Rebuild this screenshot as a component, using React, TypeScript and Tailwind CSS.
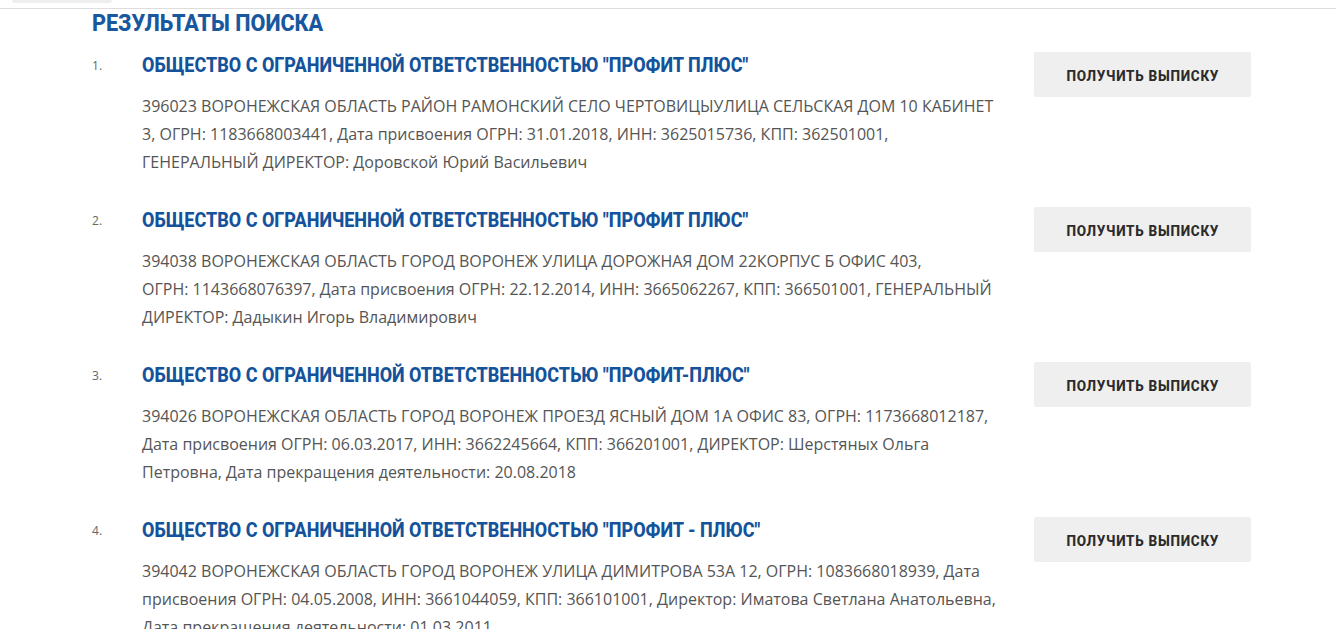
const items = [
  {
    title: 'ОБЩЕСТВО С ОГРАНИЧЕННОЙ ОТВЕТСТВЕННОСТЬЮ "ПРОФИТ ПЛЮС"',
    text: "396023 ВОРОНЕЖСКАЯ ОБЛАСТЬ РАЙОН РАМОНСКИЙ СЕЛО ЧЕРТОВИЦЫУЛИЦА СЕЛЬСКАЯ ДОМ 10 КАБИНЕТ 3, ОГРН:\u00a01183668003441, Дата присвоения ОГРН:\u00a031.01.2018, ИНН:\u00a03625015736, КПП:\u00a0362501001, ГЕНЕРАЛЬНЫЙ ДИРЕКТОР: Доровской Юрий Васильевич",
  },
  {
    title: 'ОБЩЕСТВО С ОГРАНИЧЕННОЙ ОТВЕТСТВЕННОСТЬЮ "ПРОФИТ ПЛЮС"',
    text: "394038 ВОРОНЕЖСКАЯ ОБЛАСТЬ ГОРОД ВОРОНЕЖ УЛИЦА ДОРОЖНАЯ ДОМ 22КОРПУС Б ОФИС 403, ОГРН:\u00a01143668076397, Дата присвоения ОГРН:\u00a022.12.2014, ИНН:\u00a03665062267, КПП:\u00a0366501001, ГЕНЕРАЛЬНЫЙ ДИРЕКТОР: Дадыкин Игорь Владимирович",
  },
  {
    title: 'ОБЩЕСТВО С ОГРАНИЧЕННОЙ ОТВЕТСТВЕННОСТЬЮ "ПРОФИТ-ПЛЮС"',
    text: "394026 ВОРОНЕЖСКАЯ ОБЛАСТЬ ГОРОД ВОРОНЕЖ ПРОЕЗД ЯСНЫЙ ДОМ 1А ОФИС 83, ОГРН:\u00a01173668012187, Дата присвоения ОГРН:\u00a006.03.2017, ИНН:\u00a03662245664, КПП:\u00a0366201001, ДИРЕКТОР: Шерстяных Ольга Петровна, Дата прекращения деятельности:\u00a020.08.2018",
  },
  {
    title: 'ОБЩЕСТВО С ОГРАНИЧЕННОЙ ОТВЕТСТВЕННОСТЬЮ "ПРОФИТ - ПЛЮС"',
    text: "394042 ВОРОНЕЖСКАЯ ОБЛАСТЬ ГОРОД ВОРОНЕЖ УЛИЦА ДИМИТРОВА 53А 12, ОГРН:\u00a01083668018939, Дата присвоения ОГРН:\u00a004.05.2008, ИНН:\u00a03661044059, КПП:\u00a0366101001, Директор: Иматова Светлана Анатольевна, Дата прекращения деятельности:\u00a001.03.2011",
  },
];

const cond = "font-['Roboto',sans-serif] font-extrabold";

export default function App() {
  return (
    <div className="min-h-screen bg-white font-['Open_Sans',sans-serif]">
      {/* top strip with the search field edge */}
      <div className="h-[9px] border-b border-[#dddddd]">
        <div className="ml-[12px] h-[3px] w-[100px] rounded-b-full bg-[#eeeeee]" />
      </div>

      <div className="pl-[92px]">
        <h2
          className={`${cond} text-[24px] leading-[28px] text-[#17589f] inline-block origin-left scale-x-[0.9]`}
        >
          РЕЗУЛЬТАТЫ ПОИСКА
        </h2>

        <ol className="mt-[13px]">
          {items.map((item, i) => (
            <li key={i} className="flex mb-[29px]">
              <div className="w-[50px] pt-[8px] text-[12px] leading-[16px] text-[#666]">
                {i + 1}.
              </div>
              <div className="w-[862px]">
                <div
                  className={`${cond} text-[20px] leading-[30px] text-[#14539b] inline-block origin-left scale-x-[0.9] whitespace-nowrap`}
                >
                  {item.title}
                </div>
                <p className="mt-[12px] text-[16px] leading-[28px] text-[#555]">
                  {item.text}
                </p>
              </div>
              <div className="ml-[30px] pt-[2px]">
                <button className="h-[45px] w-[217px] rounded-[2px] bg-[#efefef] flex items-center justify-center pt-[3px]">
                  <span
                    className={`${cond} text-[15px] tracking-[0.8px] text-[#2b2b2b] inline-block scale-x-[0.9]`}
                  >
                    ПОЛУЧИТЬ ВЫПИСКУ
                  </span>
                </button>
              </div>
            </li>
          ))}
        </ol>
      </div>
    </div>
  );
}
